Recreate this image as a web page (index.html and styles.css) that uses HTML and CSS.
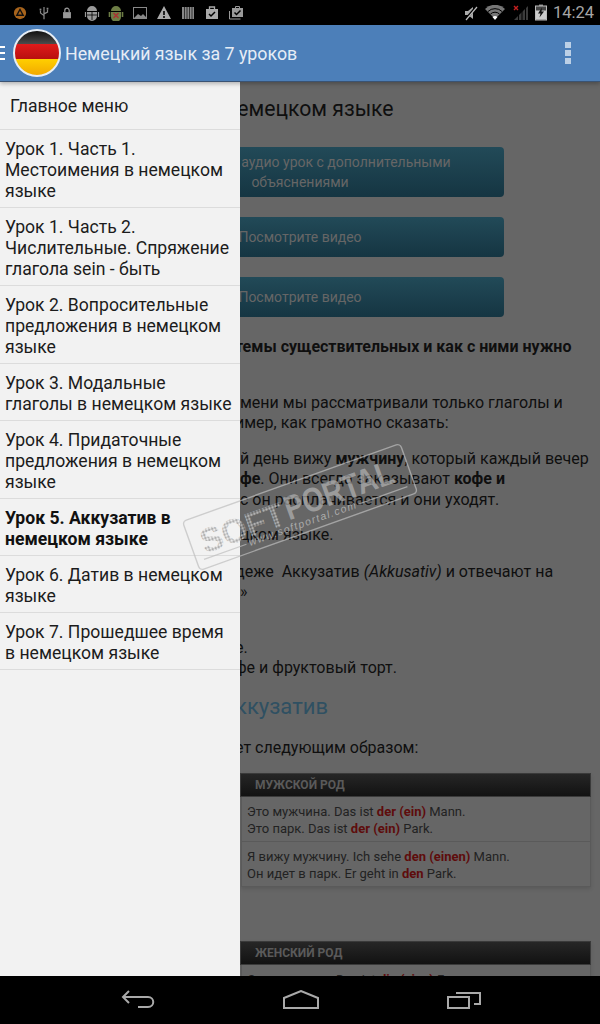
FILE: index.html
```html
<!DOCTYPE html>
<html lang="ru">
<head>
  <meta charset="UTF-8">
  <meta name="viewport" content="width=device-width, initial-scale=1.0">
  <title>Немецкий язык за 7 уроков</title>
  <link rel="stylesheet" href="styles.css">
</head>
<body>
  <div class="screen">
    <!-- status bar -->
    <div class="statusbar">
      <div class="status-left">
        <svg class="sicon" viewBox="0 0 16 16"><circle cx="8" cy="8" r="7" fill="#a8641c"/><path d="M8 4l3.600 6.500H4.400z" fill="none" stroke="#111" stroke-width="1.600"/></svg>
        <svg class="sicon" viewBox="0 0 16 16"><path d="M8 1v14M8 11L4 8V5M8 9l4-2V4" fill="none" stroke="#888" stroke-width="1.400"/><rect x="3" y="3" width="2" height="2" fill="#888"/><rect x="11" y="2" width="2" height="2" fill="#888"/></svg>
        <svg class="sicon" viewBox="0 0 16 16"><rect x="3.500" y="7" width="9" height="7" fill="#999"/><path d="M5.500 7V5a2.500 2.500 0 015 0v2" fill="none" stroke="#999" stroke-width="1.400"/></svg>
        <svg class="sicon big" viewBox="0 0 16 16"><path d="M3 6a5 5 0 0110 0zM3 7h10v4a5 5 0 01-10 0z" fill="#999"/><path d="M1.500 7v5M14.500 7v5" stroke="#999" stroke-width="1.200"/><path d="M8 7v8M3 10h10" stroke="#000" stroke-width=".8"/></svg>
        <svg class="sicon big" viewBox="0 0 16 16"><path d="M3 6a5 5 0 0110 0zM3 7h10v5a4 4 0 01-10 0z" fill="#6d7d45"/><path d="M1.500 7v5M14.500 7v5" stroke="#6d7d45" stroke-width="1.600"/><path d="M5.500 8l5 5M10.500 8l-5 5" stroke="#a33" stroke-width="1.500"/></svg>
        <svg class="sicon big" viewBox="0 0 16 16"><rect x="1.500" y="2.500" width="13" height="11" fill="#000" stroke="#888"/><path d="M2 13l4-4 3 2 2-2 3 3v1z" fill="#888"/></svg>
        <svg class="sicon big" viewBox="0 0 16 16"><path d="M8 1l7 13H1z" fill="#aaa"/><path d="M8 6v4M8 11v2" stroke="#000" stroke-width="1.600"/></svg>
        <svg class="sicon big" viewBox="0 0 16 16"><path d="M2 2h12v12H2z" fill="#888"/><path d="M4.500 2v12M7 2v12M9.500 2v12M12 2v12" stroke="#333"/></svg>
        <svg class="sicon big" viewBox="0 0 16 16"><path d="M2 4h12v10H2z" fill="#aaa"/><path d="M5.500 4V2h5v2" fill="none" stroke="#aaa" stroke-width="1.300"/><path d="M5 9l2 2 4-4" fill="none" stroke="#000" stroke-width="1.500"/></svg>
        <svg class="sicon big" viewBox="0 0 16 16"><path d="M1.500 6v8h11" fill="none" stroke="#999"/><path d="M4 3h11v9H4z" fill="#999"/><path d="M7.500 3V1.500h4V3" fill="none" stroke="#999"/><path d="M6.500 7.500l2 2 4-4" fill="none" stroke="#000" stroke-width="1.500"/></svg>
      </div>
      <div class="status-right">
        <svg class="sicon big" viewBox="0 0 16 16"><path d="M2 6h3l5-4v12l-5-4H2z" fill="#aaa"/><path d="M2 15L14 1" stroke="#000" stroke-width="2.500"/><path d="M3 15L14 2" stroke="#bbb" stroke-width="1.200"/></svg>
        <svg class="wide" viewBox="0 0 20 16"><path d="M10 14L0 4a14 14 0 0120 0z" fill="#777"/><path d="M3 6.500a10 10 0 0114 0M5.500 9a6.500 6.500 0 019 0" fill="none" stroke="#000" stroke-width="1"/><path d="M10 15l-2.500-3a4 4 0 015 0z" fill="#fff"/></svg>
        <svg class="sicon big" viewBox="0 0 16 16"><path d="M1 15l14-14v14z" fill="#3b3b3b"/><path d="M5.500 15V9M9 15V6M12.500 15V2" stroke="#000" stroke-width="1"/><path d="M1 1l4 4M5 1L1 5" stroke="#c62020" stroke-width="1.400"/></svg>
        <svg class="batt" viewBox="0 0 12 16"><rect x="4" y="0" width="4" height="1.500" fill="#888"/><rect x=".5" y="1.500" width="11" height="14" fill="#444" stroke="#bbb"/><rect x="1" y="6" width="10" height="9" fill="#ccc"/><path d="M7 3L3 9h2.500L4.500 13 9 7H6.500z" fill="#111"/></svg>
        <span class="clock">14:24</span>
      </div>
    </div>

    <!-- app bar -->
    <div class="appbar">
      <div class="burger"><i></i><i></i><i></i></div>
      <div class="flag"></div>
      <div class="app-title">Немецкий язык за 7 уроков</div>
      <div class="more"><i></i><i></i><i></i></div>
    </div>

    <div class="main">
      <!-- dimmed lesson behind the drawer -->
      <div class="lesson">
        <h1 class="title"><span class="cut-n">немецком языке</span></h1>
        <div class="btn tall">Прослушайте аудио урок с дополнительными<br>объяснениями</div>
        <div class="btn">Посмотрите видео</div>
        <div class="btn">Посмотрите видео</div>
        <p class="para lead"><b class="cut">темы существительных и как с ними нужно</b></p>
        <p class="para">мени мы рассматривали только глаголы и<br><span class="cut">имер, как грамотно сказать:</span></p>
        <p class="para">й день вижу <b>мужчину</b>, который каждый вечер<br><b>фе</b>. Они всегда заказывают <b>кофе и</b><br>с он расплачивается и они уходят.</p>
        <p class="para gap-sm">цком языке.</p>
        <p class="para"><span class="cut">деже&nbsp; Аккузатив <em>(Akkusativ)</em> и отвечают на</span><br>»</p>
        <p class="para gap-md"><span class="cut">е.</span><br><span class="cut">фе и фруктовый торт.</span></p>
        <h2 class="subtitle"><span class="cut">ккузатив</span></h2>
        <p class="para"><span class="cut">ет следующим образом:</span></p>

        <div class="gender">
          <div class="gender-head">Мужской род</div>
          <div class="gender-row">Это мужчина. Das ist <b>der (ein)</b> Mann.<br>Это парк. Das ist <b>der (ein)</b> Park.</div>
          <div class="gender-row">Я вижу мужчину. Ich sehe <b>den (einen)</b> Mann.<br>Он идет в парк. Er geht in <b>den</b> Park.</div>
        </div>

        <div class="gender">
          <div class="gender-head">Женский род</div>
          <div class="gender-row">Это женщина. Das ist <b>die (eine)</b> Frau.</div>
        </div>
      </div>

      <!-- drawer -->
      <nav class="drawer">
        <div class="menu-head">Главное меню</div>
        <div class="menu-item">Урок 1. Часть 1.<br>Местоимения в немецком языке</div>
        <div class="menu-item">Урок 1. Часть 2.<br>Числительные. Спряжение глагола sein - быть</div>
        <div class="menu-item">Урок 2. Вопросительные предложения в немецком языке</div>
        <div class="menu-item">Урок 3. Модальные глаголы в немецком языке</div>
        <div class="menu-item">Урок 4. Придаточные предложения в немецком языке</div>
        <div class="menu-item active">Урок 5. Аккузатив в немецком языке</div>
        <div class="menu-item">Урок 6. Датив в немецком языке</div>
        <div class="menu-item">Урок 7. Прошедшее время в немецком языке</div>
      </nav>

      <!-- watermark over everything -->
      <svg class="watermark" viewBox="0 0 260 130">
        <defs>
          <pattern id="dots" width="3.200" height="3.200" patternUnits="userSpaceOnUse">
            <circle cx="1.600" cy="1.600" r="1.350" fill="#b0b0b0"/>
          </pattern>
        </defs>
        <g transform="rotate(-19.700 130 65)">
          <rect x="14.500" y="39" width="231" height="52" rx="4" fill="none" stroke="#bdbdbd" stroke-opacity=".7" stroke-width="1.400"/>
          <text x="25" y="77" class="wm-soft" fill="url(#dots)" textLength="88" lengthAdjust="spacingAndGlyphs">SOFT</text>
          <text x="115" y="74" class="wm-portal" textLength="114" lengthAdjust="spacingAndGlyphs">PORTAL</text>
          <text x="70" y="85" class="wm-url" textLength="113">www.softportal.com</text>
          <path d="M22 82H67M186 82H238" stroke="#bdbdbd" stroke-opacity=".7" stroke-width="1.300"/>
        </g>
      </svg>
    </div>

    <!-- nav bar -->
    <div class="navbar">
      <svg class="nav-icon" viewBox="0 0 36 20"><path d="M8 1L2 7l6 6M2 7h25c7 0 7 10 0 10H17" fill="none" stroke="#a9a9a9" stroke-width="2"/></svg>
      <svg class="nav-icon" viewBox="0 0 36 20"><path d="M1 18V8L18 1l17 7v10z" fill="none" stroke="#a9a9a9" stroke-width="2"/></svg>
      <svg class="nav-icon" viewBox="0 0 36 20"><path d="M3 7h21v11H3z" fill="none" stroke="#a9a9a9" stroke-width="2"/><path d="M11 3h24v11h-6" fill="none" stroke="#a9a9a9" stroke-width="2"/></svg>
    </div>
  </div>
</body>
</html>
```

FILE: styles.css
```css
* { box-sizing: border-box; }
body {
  margin: 0;
  font-family: Roboto, "Noto Sans", sans-serif;
  background: #000;
}
.screen {
  width: 600px;
  height: 1024px;
  display: flex;
  flex-direction: column;
  overflow: hidden;
}

/* status bar */
.statusbar {
  height: 25px;
  background: #000;
  display: flex;
  justify-content: space-between;
  align-items: center;
  padding: 0 6px 0 13px;
  flex: none;
}
.status-left, .status-right { display: flex; align-items: center; }
.status-left .sicon { width: 14px; height: 14px; margin-right: 9.500px; }
.status-left .sicon.big { width: 16px; height: 16px; margin-right: 8px; }
.status-right .sicon { width: 16px; height: 16px; margin-right: 6px; }
.status-right .wide { width: 20px; height: 16px; margin-right: 8px; }
.status-right .batt { width: 12px; height: 17px; margin-right: 6px; }
.clock { color: #a6a6a6; font-size: 16.500px; }

/* app bar */
.appbar {
  height: 57px;
  flex: none;
  background: #4c7fb9;
  border-bottom: 1px solid #3a5373;
  display: flex;
  align-items: center;
  position: relative;
  z-index: 3;
  box-shadow: 0 2px 4px rgba(0, 0, 0, 0.25);
}
.burger { width: 5px; margin-right: 8px; display: flex; flex-direction: column; gap: 4px; }
.burger i { display: block; height: 2px; background: #fff; }
.flag {
  width: 48px;
  height: 48px;
  border-radius: 50%;
  border: 2px solid #e6edf5;
  background: linear-gradient(#111 0, #4a4a4a 29%, #e01b1b 29%, #b80f0f 64%, #ffcf00 64%, #f2a900 100%);
  flex: none;
}
.app-title { color: #e6edf6; font-size: 17.800px; margin-left: 4px; flex: 1; }
.more { display: flex; flex-direction: column; gap: 2px; margin-right: 29px; }
.more i { display: block; width: 6px; height: 6px; background: #bcd0e6; }

/* lesson behind the drawer */
.main { flex: 1; position: relative; overflow: hidden; background: #666; }
.lesson { padding: 15px 0 0 240px; color: #0f0f0f; font-size: 16px; line-height: 20.500px; }
.title { font-size: 21.200px; font-weight: 400; line-height: 24px; margin: 0 0 26px; }
.cut-n { margin-left: -15px; }
.cut { margin-left: -5px; }
.btn {
  width: 408px;
  height: 40px;
  margin: 0 0 20px -144px;
  border-radius: 4px;
  background: linear-gradient(#224a58, #153542);
  color: #666;
  font-size: 14px;
  line-height: 20px;
  text-align: center;
  display: flex;
  align-items: center;
  justify-content: center;
}
.btn.tall { height: 50px; }
.para { margin: 0 0 15px; }
.para.lead { margin-top: 20px; margin-bottom: 35px; }
.para.gap-sm { margin-bottom: 16px; }
.para.gap-md { margin-top: 35px; }
.subtitle { color: #2f5062; font-size: 22px; font-weight: 400; line-height: 26px; margin: 15px 0 18px; }
.gender { margin: 0 9px 54px 1px; box-shadow: 0 2px 4px rgba(0, 0, 0, 0.12); }
.gender-head {
  height: 24px;
  margin-left: -1px;
  padding-left: 14px;
  background: linear-gradient(#262626, #121212);
  border: 1px solid #3a3a3a;
  color: #5a5a5a;
  font-size: 12px;
  font-weight: 700;
  line-height: 22px;
  text-transform: uppercase;
}
.gender-row {
  padding: 6px 5px 4px;
  border: 1px solid #5a5a5a;
  border-top: 0;
  color: #222;
  font-size: 13px;
  line-height: 17px;
}
.gender-row b { color: #5e0c0c; }

/* drawer */
.drawer {
  position: absolute;
  top: 0;
  left: 0;
  bottom: 0;
  width: 240px;
  background: #f2f2f2;
  color: #1c1c1c;
  font-size: 17.600px;
  line-height: 21px;
  z-index: 1;
}
.menu-head { height: 48px; padding: 14px 10px 0; border-bottom: 1px solid #dcdcdc; }
.menu-item { padding: 9px 5px 5px; border-bottom: 1px solid #dcdcdc; }
.menu-item.active { font-weight: 700; color: #111; }

/* watermark */
.watermark {
  position: absolute;
  left: 170px;
  top: 360px;
  width: 260px;
  height: 130px;
  z-index: 2;
}
.wm-soft { font: 700 34px "Liberation Sans", sans-serif; }
.wm-portal { font: 700 34px "Liberation Sans", sans-serif; fill: #b4b4b4; fill-opacity: 0.7; }
.wm-url { font: italic 10.500px "Liberation Sans", sans-serif; fill: #bdbdbd; fill-opacity: 0.8; }

/* nav bar */
.navbar {
  height: 48px;
  flex: none;
  background: #000;
  display: flex;
  align-items: center;
  padding: 0 119px 0 121px;
  justify-content: space-between;
}
.nav-icon { width: 36px; height: 20px; }
```
